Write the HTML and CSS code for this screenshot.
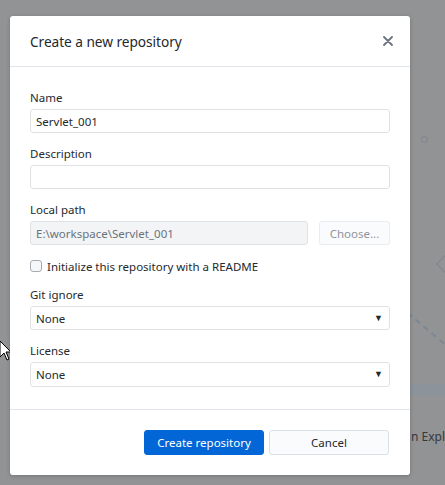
FILE: index.html
```html
<!DOCTYPE html>
<html lang="en">
<head>
  <meta charset="UTF-8" />
  <title>Create a new repository</title>
  <link rel="stylesheet" href="styles.css">
</head>
<body>
  <!-- app behind the overlay -->
  <div class="backdrop">
    <span class="bg-dot"></span>
    <span class="bg-diamond"></span>
    <span class="bg-dash"></span>
    <span class="bg-band"></span>
    <span class="bg-text">n Expl</span>
    <svg class="cursor" width="14" height="22" viewBox="0 0 14 22">
      <path d="M1 1 L1 17 L5 13 L8 20 L10 19 L7 12 L12 12 Z" fill="#fff" stroke="#000" stroke-width="1"/>
    </svg>
  </div>

  <div class="dialog">
    <div class="dialog-header">
      <h1>Create a new repository</h1>
      <button class="close" aria-label="Close">
        <svg width="10" height="10" viewBox="0 0 10 10">
          <path d="M1 1 L9 9 M9 1 L1 9" stroke="#6a737d" stroke-width="1.8" stroke-linecap="round"/>
        </svg>
      </button>
    </div>

    <div class="dialog-body">
      <label class="field-label" for="name">Name</label>
      <input id="name" class="field" type="text" value="Servlet_001" />

      <label class="field-label" for="desc">Description</label>
      <input id="desc" class="field" type="text" />

      <label class="field-label" for="path">Local path</label>
      <div class="path-row">
        <input id="path" class="field field-disabled" type="text" value="E:\workspace\Servlet_001" disabled />
        <button class="btn btn-choose" disabled>Choose...</button>
      </div>

      <label class="check-row">
        <input type="checkbox" class="check" />
        <span>Initialize this repository with a README</span>
      </label>

      <label class="field-label" for="gitignore">Git ignore</label>
      <div class="select-wrap">
        <select id="gitignore" class="field"><option>None</option></select>
        <span class="caret">▼</span>
      </div>

      <label class="field-label" for="license">License</label>
      <div class="select-wrap">
        <select id="license" class="field field-tall"><option>None</option></select>
        <span class="caret">▼</span>
      </div>
    </div>

    <div class="dialog-footer">
      <button class="btn btn-primary">Create repository</button>
      <button class="btn btn-default">Cancel</button>
    </div>
  </div>
</body>
</html>
```

FILE: styles.css
```css
html, body { margin: 0; height: 100%; }
body {
  background: #929394;
  font-family: "Noto Sans", "Open Sans", sans-serif;
  font-size: 12px;
  color: #24292e;
  overflow: hidden;
  position: relative;
}

/* faint app behind the modal */
.backdrop { position: absolute; inset: 0; }
.bg-dot {
  position: absolute; left: 421px; top: 136px;
  width: 5px; height: 5px; border: 1px solid #7d8590; border-radius: 50%;
}
.bg-diamond {
  position: absolute; left: 439px; top: 257px;
  width: 12px; height: 12px; border: 1px solid #7d8590; transform: rotate(45deg);
}
.bg-dash {
  position: absolute; left: 408px; top: 312px;
  width: 48px; border-top: 2px dashed #7d8894; transform: rotate(40deg); transform-origin: 0 0;
}
.bg-band {
  position: absolute; left: 400px; right: 0; top: 384px; height: 12px; background: #8c939b;
}
.bg-text {
  position: absolute; left: 411px; top: 428px;
  font-family: "Noto Sans", sans-serif; font-size: 12px; color: #36393c; white-space: nowrap;
}
.cursor { position: absolute; left: -1px; top: 340px; }

.dialog {
  position: relative;
  margin: 16px 0 0 10px;
  width: 400px;
  height: 459px;
  background: #fff;
  border-radius: 3px;
  box-shadow: 0 1px 4px rgba(0,0,0,0.2);
  display: flex;
  flex-direction: column;
  overflow: hidden;
}

.dialog-header {
  height: 50px;
  border-bottom: 1px solid #e1e4e8;
  display: flex;
  align-items: center;
  justify-content: space-between;
  padding: 0 14px 0 20px;
}
.dialog-header h1 {
  margin: 0;
  font-size: 13.7px;
  font-weight: normal;
  color: #24292e;
  letter-spacing: -0.05px;
}
.close {
  border: none; background: none; padding: 2px; width: 16px; height: 16px;
  display: flex; align-items: center; justify-content: center; cursor: pointer;
}

.dialog-body {
  flex: 1;
  padding: 23px 20px 0 20px;
  display: flex;
  flex-direction: column;
}
.field-label {
  display: block;
  line-height: 16px;
  height: 16px;
  margin-bottom: 3px;
  font-size: 11.5px;
  color: #24292e;
}
.field {
  box-sizing: border-box;
  width: 100%;
  height: 24px;
  margin: 0 0 13px 0;
  padding: 0 5px;
  border: 1px solid #dfe2e5;
  border-radius: 3px;
  background: #fff;
  font-family: inherit;
  font-size: 11.5px;
  color: #24292e;
  outline: none;
}
.field-tall { height: 25px; }
.field-disabled { background: #f3f4f6; color: #6a737d; }

.path-row { display: flex; gap: 11px; }
.path-row .field { flex: 1; }

.check-row {
  display: flex;
  align-items: center;
  height: 16px;
  margin: 0 0 13px 0;
  font-size: 11.5px;
}
.check {
  margin: 0 5px 0 0;
  width: 12px; height: 12px;
  appearance: none;
  border: 1px solid #a8acb1;
  border-radius: 3px;
  background: #f6f7f8;
}

.select-wrap { position: relative; }
.select-wrap select { appearance: none; }
.caret {
  position: absolute; right: 7px; top: 5px;
  font-size: 9px; color: #24292e; pointer-events: none;
}

.btn {
  box-sizing: border-box;
  height: 25px;
  width: 120px;
  border-radius: 3px;
  font-family: inherit;
  font-size: 11.5px;
  cursor: pointer;
}
.btn-choose {
  width: 71px;
  height: 24px;
  border: 1px solid #eaecef;
  background: #fafbfc;
  color: #8e959c;
}
.btn-primary { background: #0366d6; border: 1px solid #0366d6; color: #fff; }
.btn-default { background: #fafbfc; border: 1px solid #dcdfe3; color: #24292e; }

.dialog-footer {
  border-top: 1px solid #e1e4e8;
  padding: 20px 21px 20px 20px;
  display: flex;
  justify-content: flex-end;
  gap: 5px;
}
```
